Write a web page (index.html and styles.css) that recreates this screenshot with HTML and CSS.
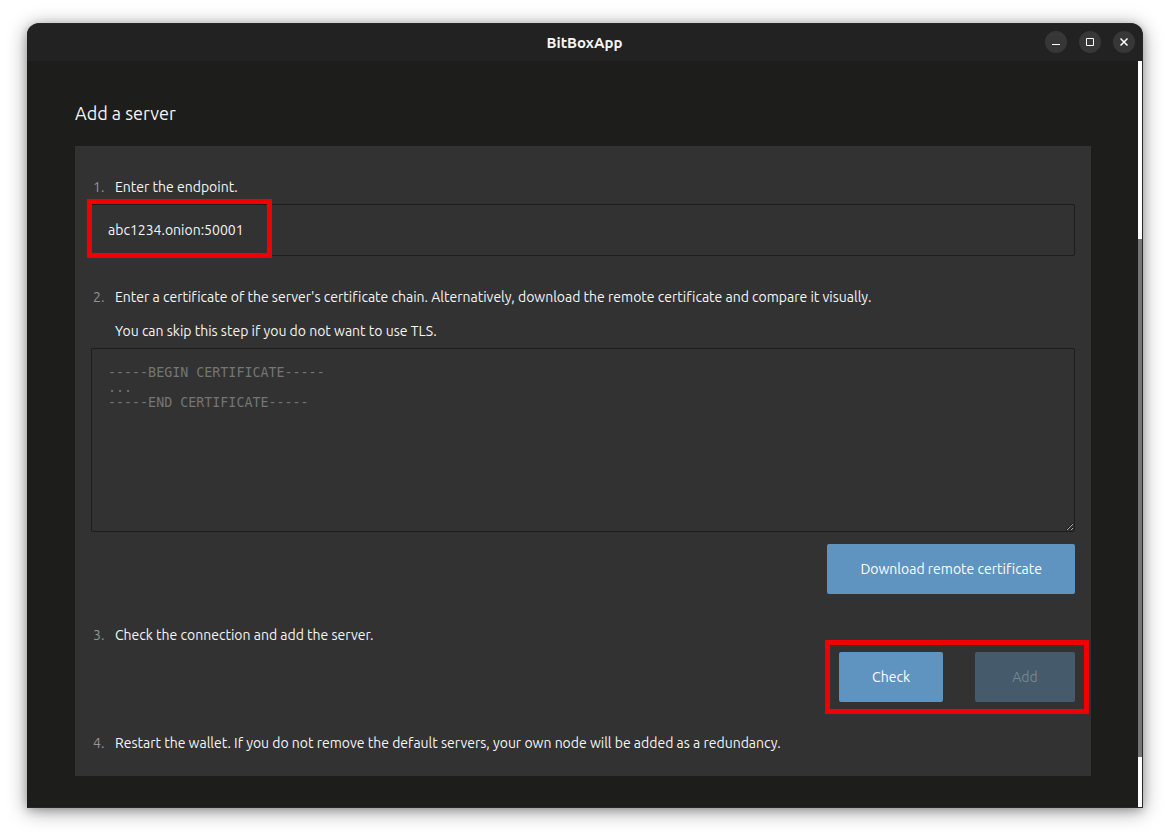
FILE: index.html
```html
<!DOCTYPE html>
<html lang="en">
<head>
<meta charset="utf-8">
<title>BitBoxApp</title>
<link rel="stylesheet" href="styles.css">
</head>
<body>
<div class="window">
  <header class="titlebar">
    <span class="titlebar-name">BitBoxApp</span>
    <div class="window-controls">
      <button class="window-button" type="button" aria-label="Minimize"><svg viewBox="0 0 22 22"><path d="M7 13.5h8"/></svg></button>
      <button class="window-button" type="button" aria-label="Maximize"><svg viewBox="0 0 22 22"><path d="M7.5 7.5h7v7h-7z"/></svg></button>
      <button class="window-button" type="button" aria-label="Close"><svg viewBox="0 0 22 22"><path class="cross" d="M7.5 7.5l7 7M14.5 7.5l-7 7"/></svg></button>
    </div>
  </header>
  <div class="viewport">
    <main class="content">
      <h1 class="page-title">Add a server</h1>
      <form class="panel">
        <ol class="steps">
          <li class="step">
            <div class="step-line"><span class="step-number">1.</span><label for="endpoint">Enter the endpoint.</label></div>
            <div class="field">
              <input class="text-input" id="endpoint" type="text" value="abc1234.onion:50001">
              <span class="highlight highlight-endpoint"></span>
            </div>
          </li>
          <li class="step">
            <div class="step-line"><span class="step-number">2.</span><label for="certificate">Enter a certificate of the server's certificate chain. Alternatively, download the remote certificate and compare it visually.<br>You can skip this step if you do not want to use TLS.</label></div>
            <textarea class="text-area" id="certificate" placeholder="-----BEGIN CERTIFICATE-----&#10;...&#10;-----END CERTIFICATE-----"></textarea>
            <div class="actions actions-download">
              <button class="button" type="button">Download remote certificate</button>
            </div>
          </li>
          <li class="step">
            <div class="step-line"><span class="step-number">3.</span><p class="step-text">Check the connection and add the server.</p></div>
            <div class="actions">
              <div class="button-pair">
                <button class="button" type="button">Check</button>
                <button class="button" type="submit" disabled>Add</button>
                <span class="highlight highlight-buttons"></span>
              </div>
            </div>
          </li>
          <li class="step">
            <div class="step-line"><span class="step-number">4.</span><p class="step-text">Restart the wallet. If you do not remove the default servers, your own node will be added as a redundancy.</p></div>
          </li>
        </ol>
      </form>
    </main>
    <div class="scrollbar"><div class="scrollbar-thumb"></div></div>
  </div>
</div>
</body>
</html>
```
FILE: styles.css
```css
* {
  box-sizing: border-box;
}

body {
  margin: 0;
  min-height: 100vh;
  display: flex;
  padding: 23px 31px 24px 27px;
  background: #ffffff;
  color: #f5f5f5;
  font-family: Ubuntu, "Open Sans", "Noto Sans", sans-serif;
  font-size: 14px;
  font-variant-ligatures: none;
}

.window {
  flex: 1;
  display: flex;
  flex-direction: column;
  overflow: hidden;
  border: 1px solid #272727;
  border-width: 1px 1px 1px 0;
  border-radius: 12px 12px 0 0;
  background: #1d1d1b;
  box-shadow: 0 3px 20px rgba(0, 0, 0, 0.4), 0 2px 8px rgba(0, 0, 0, 0.2);
}

.titlebar {
  display: grid;
  grid-template-columns: 1fr auto 1fr;
  align-items: center;
  height: 37px;
  background: #222222;
}

.titlebar-name {
  grid-column: 2;
  font-size: 15px;
  font-weight: 700;
}

.window-controls {
  display: flex;
  justify-content: flex-end;
  gap: 12px;
  padding: 0 7px 2px 0;
}

.window-button {
  width: 22px;
  height: 22px;
  padding: 0;
  border: 0;
  border-radius: 50%;
  background: #373737;
}

.window-button svg {
  display: block;
  fill: none;
  stroke: #ffffff;
  stroke-width: 1;
}

.window-button .cross {
  stroke-width: 1.5;
}

.viewport {
  flex: 1;
  display: flex;
}

.content {
  flex: 1;
  padding: 39px 47px 31px 48px;
}

.page-title {
  margin: 0 0 20px;
  font-size: 18px;
  font-weight: 400;
  line-height: 26px;
}

.panel {
  padding: 24px 16px 16px;
  background: #323232;
}

.steps {
  display: flex;
  flex-direction: column;
  gap: 24px;
  margin: 0;
  padding: 0;
  list-style: none;
}

.step-line {
  display: flex;
  line-height: 34px;
}

.step-number {
  flex: none;
  width: 24px;
  padding-left: 2px;
  color: #949494;
}

.step-text {
  margin: 0;
}

.field {
  position: relative;
}

.text-input,
.text-area {
  display: block;
  width: 100%;
  border: 1px solid #1d1d1b;
  border-radius: 2px;
  background: transparent;
  color: #f5f5f5;
}

.text-input {
  height: 52px;
  padding: 0 16px;
  font-family: inherit;
  font-size: 14px;
}

.text-area {
  height: 184px;
  padding: 16px;
  font-family: "DejaVu Sans Mono", monospace;
  line-height: 15px;
  resize: vertical;
}

.text-area::placeholder {
  color: #757575;
}

.actions {
  display: flex;
  justify-content: flex-end;
}

.actions-download {
  margin-top: 12px;
}

.button-pair {
  position: relative;
  display: flex;
  gap: 32px;
}

.button {
  height: 50px;
  min-width: 100px;
  padding: 0 33px;
  border: 0;
  border-radius: 2px;
  background: #5e94bf;
  color: #ffffff;
  font-family: inherit;
  font-size: 14px;
  font-variant-ligatures: none;
}

.button:disabled {
  background: #455a6a;
  color: #788590;
}

.highlight {
  position: absolute;
  border: 5px solid #f00000;
  pointer-events: none;
}

.highlight-endpoint {
  top: -5px;
  left: -4px;
  width: 185px;
  height: 59px;
}

.highlight-buttons {
  inset: -12px -14px;
}

.scrollbar {
  width: 4px;
  display: grid;
  grid-template-rows: 178fr 518fr 50fr;
  background: #ffffff;
}

.scrollbar-thumb {
  grid-row: 2;
  background: #757575;
}
```
